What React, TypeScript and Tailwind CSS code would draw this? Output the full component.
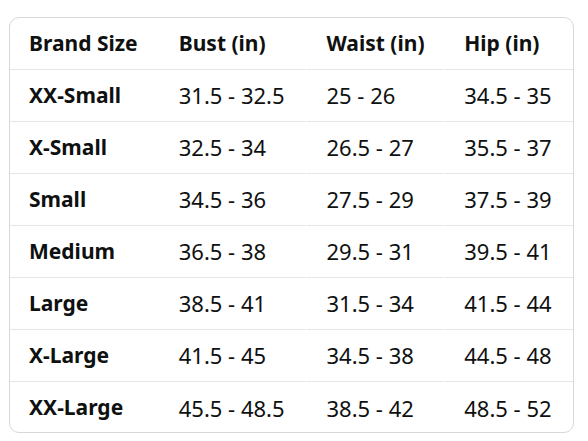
import React from 'react';

const rows = [
  ['XX-Small', '31.5 - 32.5', '25 - 26', '34.5 - 35'],
  ['X-Small', '32.5 - 34', '26.5 - 27', '35.5 - 37'],
  ['Small', '34.5 - 36', '27.5 - 29', '37.5 - 39'],
  ['Medium', '36.5 - 38', '29.5 - 31', '39.5 - 41'],
  ['Large', '38.5 - 41', '31.5 - 34', '41.5 - 44'],
  ['X-Large', '41.5 - 45', '34.5 - 38', '44.5 - 48'],
  ['XX-Large', '45.5 - 48.5', '38.5 - 42', '48.5 - 52'],
];

const header = ['Brand Size', 'Bust (in)', 'Waist (in)', 'Hip (in)'];

// column widths, with a 1px gap before the last two columns
const colClass = [
  'w-[150px]',
  'w-[147px]',
  'w-[137px] ml-px',
  'w-[128px] ml-px',
];

function Row({ cells, bold, last }: { cells: string[]; bold?: boolean; last?: boolean }) {
  return (
    <div className="flex h-[52px]">
      {cells.map((c, i) => (
        <div
          key={i}
          className={
            colClass[i] +
            ' flex items-center pl-[19px] ' +
            (last ? '' : 'border-b border-[#e3e6e6] ') +
            (bold || i === 0 ? 'font-bold text-[21px]' : 'font-normal text-[22px]')
          }
        >
          {c}
        </div>
      ))}
    </div>
  );
}

export default function App() {
  return (
    <div
      className="w-[588px] h-[441px] bg-white pt-[17px] pl-[9px]"
      style={{ fontFamily: '"Noto Sans", Roboto, sans-serif' }}
    >
      <div className="w-[565px] h-[416px] border border-[#d5d9d9] rounded-[10px] overflow-hidden text-[#0f1111]">
        <Row cells={header} bold />
        {rows.map((r, i) => (
          <Row key={r[0]} cells={r} last={i === rows.length - 1} />
        ))}
      </div>
    </div>
  );
}
